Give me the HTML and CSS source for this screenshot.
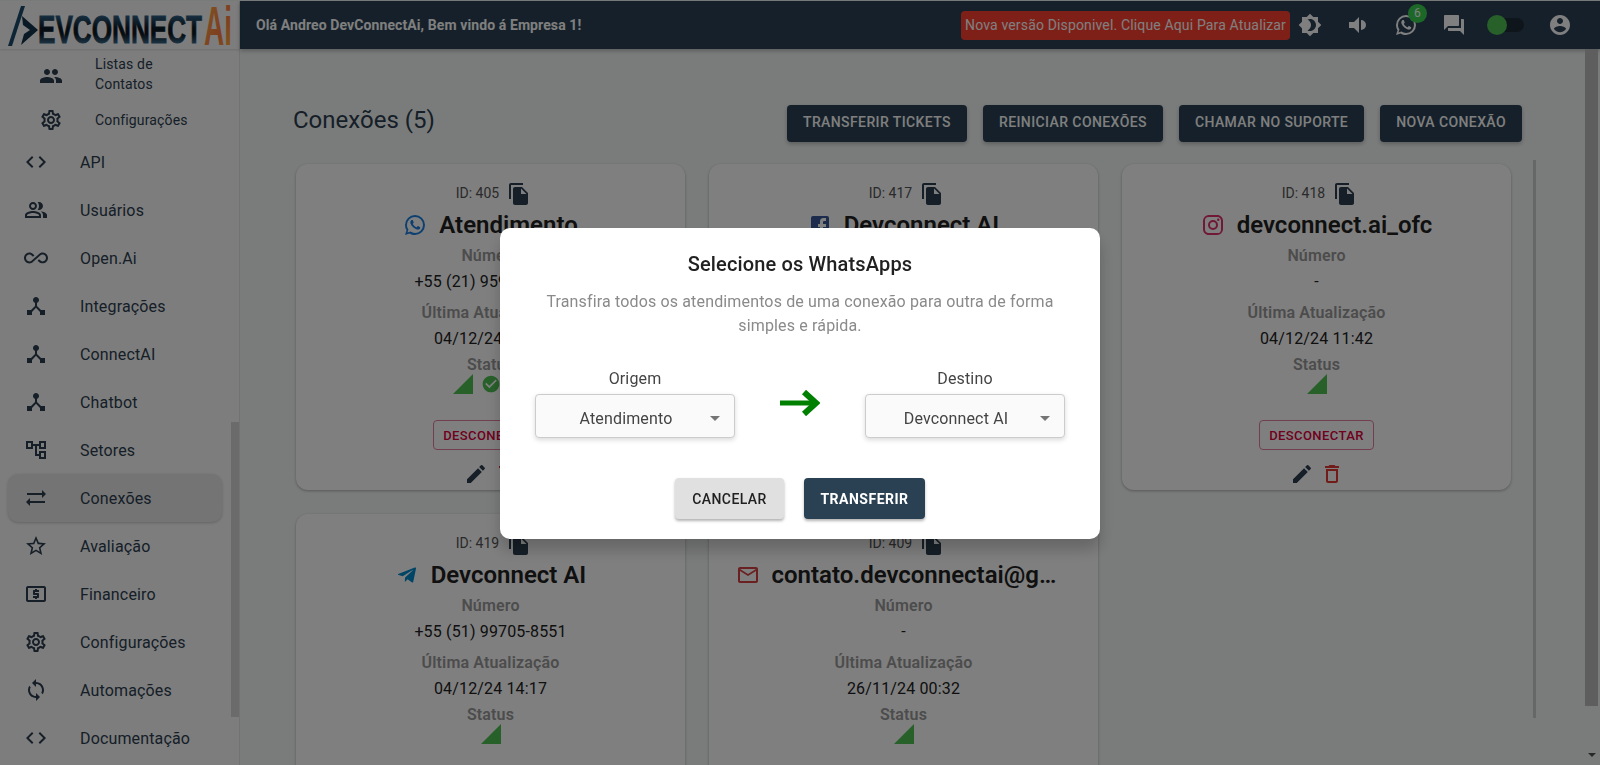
FILE: index.html
```html
<!DOCTYPE html>
<html lang="en">
<head>
  <meta charset="UTF-8" />
  <meta name="viewport" content="width=device-width, initial-scale=1.0"/>
  <title>Conexões</title>
  <link rel="stylesheet" href="styles.css">
</head>
<body>
  <svg class="icon-defs" aria-hidden="true">
    <symbol id="i-people" viewBox="0 0 24 24"><path d="M16 11c1.66 0 2.99-1.34 2.99-3S17.66 5 16 5c-1.66 0-3 1.34-3 3s1.34 3 3 3zm-8 0c1.66 0 2.99-1.34 2.99-3S9.66 5 8 5C6.34 5 5 6.34 5 8s1.34 3 3 3zm0 2c-2.33 0-7 1.17-7 3.5V19h14v-2.5c0-2.33-4.67-3.5-7-3.5zm8 0c-.29 0-.62.02-.97.05 1.16.84 1.97 1.97 1.97 3.45V19h6v-2.5c0-2.33-4.67-3.5-7-3.5z"/></symbol>
    <symbol id="i-gear" viewBox="0 0 24 24"><path d="M19.43 12.98c.04-.32.07-.64.07-.98 0-.34-.03-.66-.07-.98l2.11-1.65c.19-.15.24-.42.12-.64l-2-3.46c-.09-.16-.26-.25-.44-.25-.06 0-.12.01-.17.03l-2.49 1c-.52-.4-1.08-.73-1.69-.98l-.38-2.65C14.46 2.18 14.25 2 14 2h-4c-.25 0-.46.18-.49.42l-.38 2.65c-.61.25-1.17.59-1.69.98l-2.49-1c-.06-.02-.12-.03-.18-.03-.17 0-.34.09-.43.25l-2 3.46c-.13.22-.07.49.12.64l2.11 1.65c-.04.32-.07.65-.07.98 0 .33.03.66.07.98l-2.11 1.65c-.19.15-.24.42-.12.64l2 3.46c.09.16.26.25.44.25.06 0 .12-.01.17-.03l2.49-1c.52.4 1.08.73 1.69.98l.38 2.65c.03.24.24.42.49.42h4c.25 0 .46-.18.49-.42l.38-2.65c.61-.25 1.17-.59 1.69-.98l2.49 1c.06.02.12.03.18.03.17 0 .34-.09.43-.25l2-3.46c.12-.22.07-.49-.12-.64l-2.11-1.65zm-1.98-1.71c.04.31.05.52.05.73 0 .21-.02.43-.05.73l-.14 1.13.89.7 1.08.84-.7 1.21-1.27-.51-1.04-.42-.9.68c-.43.32-.84.56-1.25.73l-1.06.43-.16 1.13-.2 1.35h-1.4l-.19-1.35-.16-1.13-1.06-.43c-.43-.18-.83-.41-1.23-.71l-.91-.7-1.06.43-1.27.51-.7-1.21 1.08-.84.89-.7-.14-1.13c-.03-.31-.05-.54-.05-.74s.02-.43.05-.73l.14-1.13-.89-.7-1.08-.84.7-1.21 1.27.51 1.04.42.9-.68c.43-.32.84-.56 1.25-.73l1.06-.43.16-1.13.2-1.35h1.39l.19 1.35.16 1.13 1.06.43c.43.18.83.41 1.23.71l.91.7 1.06-.43 1.27-.51.7 1.21-1.07.85-.89.7.14 1.13zM12 8c-2.21 0-4 1.79-4 4s1.79 4 4 4 4-1.79 4-4-1.79-4-4-4zm0 6c-1.1 0-2-.9-2-2s.9-2 2-2 2 .9 2 2-.9 2-2 2z"/></symbol>
    <symbol id="i-code" viewBox="0 0 24 24"><path d="M9.4 16.6L4.8 12l4.6-4.6L8 6l-6 6 6 6 1.4-1.4zm5.2 0l4.6-4.6-4.6-4.6L16 6l6 6-6 6-1.4-1.4z"/></symbol>
    <symbol id="i-users" viewBox="0 0 24 24"><path d="M16.67 13.13C18.04 14.06 19 15.32 19 17v3h4v-3c0-2.18-3.57-3.47-6.33-3.87zM15 12c2.21 0 4-1.79 4-4s-1.79-4-4-4c-.47 0-.91.1-1.33.24C14.5 5.27 15 6.58 15 8s-.5 2.73-1.33 3.76c.42.14.86.24 1.33.24zM9 12c2.21 0 4-1.79 4-4s-1.79-4-4-4-4 1.79-4 4 1.79 4 4 4zm0-6c1.1 0 2 .9 2 2s-.9 2-2 2-2-.9-2-2 .9-2 2-2zM9 13c-2.67 0-8 1.34-8 4v3h16v-3c0-2.66-5.33-4-8-4zm6 5H3v-.99C3.2 16.29 6.3 15 9 15s5.8 1.29 6 2z"/></symbol>
    <symbol id="i-infinity" viewBox="0 0 24 24"><path d="M18.6 6.62c-1.44 0-2.8.56-3.77 1.53L12 10.66 10.48 12h.01L7.8 14.39c-.64.64-1.49.99-2.4.99-1.87 0-3.39-1.51-3.39-3.38S3.53 8.62 5.4 8.62c.91 0 1.76.35 2.44 1.03l1.13 1 1.51-1.34L9.22 8.2C8.2 7.18 6.84 6.62 5.4 6.62 2.42 6.62 0 9.04 0 12s2.42 5.38 5.4 5.38c1.44 0 2.8-.56 3.77-1.53l2.83-2.5.01.01L13.52 12h-.01l2.69-2.39c.64-.64 1.49-.99 2.4-.99 1.87 0 3.39 1.51 3.39 3.38s-1.52 3.38-3.39 3.38c-.9 0-1.76-.35-2.44-1.03l-1.14-1.01-1.51 1.34 1.27 1.12c1.02 1.01 2.37 1.57 3.82 1.57 2.98 0 5.4-2.41 5.4-5.38s-2.42-5.37-5.4-5.37z"/></symbol>
    <symbol id="i-hub" viewBox="0 0 24 24"><path d="M17 16l-4-4V8.82C14.16 8.4 15 7.3 15 6c0-1.66-1.34-3-3-3S9 4.34 9 6c0 1.3.84 2.4 2 2.82V12l-4 4H3v5h5v-3.05l4-4.2 4 4.2V21h5v-5h-4z"/></symbol>
    <symbol id="i-tree" viewBox="0 0 24 24"><path d="M22 11V3h-7v3H9V3H2v8h7V8h2v10h4v3h7v-8h-7v3h-2V8h2v3h7zM7 9H4V5h3v4zm10 6h3v4h-3v-4zm0-10h3v4h-3V5z"/></symbol>
    <symbol id="i-sync" viewBox="0 0 24 24"><path d="M22 8l-4-4v3H3v2h15v3l4-4zM2 16l4 4v-3h15v-2H6v-3l-4 4z"/></symbol>
    <symbol id="i-star" viewBox="0 0 24 24"><path d="M22 9.24l-7.19-.62L12 2 9.19 8.63 2 9.24l5.46 4.73L5.82 21 12 17.27 18.18 21l-1.63-7.03L22 9.24zM12 15.4l-3.76 2.27 1-4.28-3.32-2.88 4.38-.38L12 6.1l1.71 4.04 4.38.38-3.32 2.88 1 4.28L12 15.4z"/></symbol>
    <symbol id="i-money" viewBox="0 0 24 24"><path d="M11 17h2v-1h1c.55 0 1-.45 1-1v-3c0-.55-.45-1-1-1h-3v-1h4V8h-2V7h-2v1h-1c-.55 0-1 .45-1 1v3c0 .55.45 1 1 1h3v1H9v2h2v1zm9-13H4c-1.11 0-1.99.89-1.99 2L2 18c0 1.11.89 2 2 2h16c1.11 0 2-.89 2-2V6c0-1.11-.89-2-2-2zm0 14H4V6h16v12z"/></symbol>
    <symbol id="i-loop" viewBox="0 0 24 24"><path d="M12 4V1L8 5l4 4V6c3.31 0 6 2.69 6 6 0 1.01-.25 1.97-.7 2.8l1.46 1.46C19.54 15.03 20 13.57 20 12c0-4.42-3.58-8-8-8zm0 14c-3.31 0-6-2.69-6-6 0-1.01.25-1.97.7-2.8L5.24 7.74C4.46 8.97 4 10.43 4 12c0 4.42 3.58 8 8 8v3l4-4-4-4v3z"/></symbol>
    <symbol id="i-brightness" viewBox="0 0 24 24"><path d="M20 8.69V4h-4.69L12 .69 8.69 4H4v4.69L.69 12 4 15.31V20h4.69L12 23.31 15.31 20H20v-4.69L23.31 12 20 8.69zM12 18c-.89 0-1.74-.2-2.5-.55C11.56 16.5 13 14.42 13 12s-1.44-4.5-3.5-5.45C10.26 6.2 11.11 6 12 6c3.31 0 6 2.69 6 6s-2.69 6-6 6z"/></symbol>
    <symbol id="i-volume" viewBox="0 0 24 24"><path d="M3 9v6h5l5 5V4L8 9H3zM15 7a5 5 0 0 1 0 10z"/></symbol>
    <symbol id="i-whatsapp" viewBox="0 0 24 24"><path d="M16.75 13.96c.25.13.41.2.46.3.06.11.04.61-.21 1.18-.2.56-1.24 1.1-1.7 1.12-.46.02-.47.36-2.96-.73-2.49-1.09-3.99-3.75-4.11-3.92-.12-.17-.96-1.38-.92-2.61.05-1.22.69-1.8.95-2.04.24-.26.51-.29.68-.26h.47c.15 0 .36-.06.55.45l.69 1.87c.06.13.1.28.01.44l-.27.41-.39.42c-.12.12-.26.25-.12.5.12.26.62 1.09 1.32 1.78.91.88 1.71 1.17 1.95 1.3.24.14.39.12.54-.04l.81-.94c.19-.25.35-.19.58-.11l1.67.88M12 2a10 10 0 0 1 10 10 10 10 0 0 1-10 10c-1.97 0-3.8-.57-5.35-1.55L2 22l1.55-4.65A9.969 9.969 0 0 1 2 12 10 10 0 0 1 12 2m0 2a8 8 0 0 0-8 8c0 1.72.54 3.31 1.46 4.61L4.5 19.5l2.89-.96A7.95 7.95 0 0 0 12 20a8 8 0 0 0 8-8 8 8 0 0 0-8-8z"/></symbol>
    <symbol id="i-forum" viewBox="0 0 24 24"><path d="M21 6h-2v9H6v2c0 .55.45 1 1 1h11l4 4V7c0-.55-.45-1-1-1zm-4 6V3c0-.55-.45-1-1-1H3c-.55 0-1 .45-1 1v14l4-4h10c.55 0 1-.45 1-1z"/></symbol>
    <symbol id="i-account" viewBox="0 0 24 24"><path d="M12 2C6.48 2 2 6.48 2 12s4.48 10 10 10 10-4.48 10-10S17.52 2 12 2zm0 3c1.66 0 3 1.34 3 3s-1.34 3-3 3-3-1.34-3-3 1.34-3 3-3zm0 14.2c-2.5 0-4.71-1.28-6-3.22.03-1.99 4-3.08 6-3.08 1.99 0 5.97 1.09 6 3.08-1.29 1.94-3.5 3.22-6 3.22z"/></symbol>
    <symbol id="i-copy" viewBox="0 0 24 24"><path d="M16 1H4c-1.1 0-2 .9-2 2v14h2V3h12V1zm-1 4l6 6v10c0 1.1-.9 2-2 2H7.99C6.89 23 6 22.1 6 21l.01-14c0-1.1.89-2 1.99-2h7zm-1 7h5.5L14 6.5V12z"/></symbol>
    <symbol id="i-signal" viewBox="0 0 24 24"><path d="M2 22h20V2z"/></symbol>
    <symbol id="i-check" viewBox="0 0 24 24"><path d="M12 2C6.48 2 2 6.48 2 12s4.48 10 10 10 10-4.48 10-10S17.52 2 12 2zm-2 15l-5-5 1.41-1.41L10 14.17l7.59-7.59L19 8l-9 9z"/></symbol>
    <symbol id="i-edit" viewBox="0 0 24 24"><path d="M3 17.25V21h3.75L17.81 9.94l-3.75-3.75L3 17.25zM20.71 7.04c.39-.39.39-1.02 0-1.41l-2.34-2.34a.9959.9959 0 0 0-1.41 0l-1.83 1.83 3.75 3.75 1.83-1.83z"/></symbol>
    <symbol id="i-delete" viewBox="0 0 24 24"><path d="M6 19c0 1.1.9 2 2 2h8c1.1 0 2-.9 2-2V7H6v12zM8 9h8v10H8V9zm7.5-5l-1-1h-5l-1 1H5v2h14V4z"/></symbol>
    <symbol id="i-facebook" viewBox="0 0 24 24"><path d="M5 3h14a2 2 0 0 1 2 2v14a2 2 0 0 1-2 2h-4v-7h3v-3h-3V9a1 1 0 0 1 1-1h2V5h-2.5A3.5 3.5 0 0 0 12 8.5V11h-2v3h2v7H5a2 2 0 0 1-2-2V5a2 2 0 0 1 2-2z"/></symbol>
    <symbol id="i-instagram" viewBox="0 0 24 24"><path d="M7.8 2h8.4C19.4 2 22 4.6 22 7.8v8.4a5.8 5.8 0 0 1-5.8 5.8H7.8C4.6 22 2 19.4 2 16.2V7.8A5.8 5.8 0 0 1 7.8 2m-.2 2A3.6 3.6 0 0 0 4 7.6v8.8C4 18.39 5.61 20 7.6 20h8.8a3.6 3.6 0 0 0 3.6-3.6V7.6C20 5.61 18.39 4 16.4 4H7.6m9.65 1.5a1.25 1.25 0 0 1 1.25 1.25A1.25 1.25 0 0 1 17.25 8 1.25 1.25 0 0 1 16 6.75a1.25 1.25 0 0 1 1.25-1.25M12 7a5 5 0 0 1 5 5 5 5 0 0 1-5 5 5 5 0 0 1-5-5 5 5 0 0 1 5-5m0 2a3 3 0 0 0-3 3 3 3 0 0 0 3 3 3 3 0 0 0 3-3 3 3 0 0 0-3-3z"/></symbol>
    <symbol id="i-telegram" viewBox="0 0 24 24"><path d="M9.78 18.65l.28-4.23 7.68-6.92c.34-.31-.07-.46-.52-.19L7.74 13.3 3.64 12c-.88-.25-.89-.86.2-1.3l15.97-6.16c.73-.33 1.43.18 1.15 1.3l-2.72 12.81c-.19.91-.74 1.13-1.5.71L12.6 16.3l-1.99 1.93c-.23.23-.42.42-.83.42z"/></symbol>
    <symbol id="i-mail" viewBox="0 0 24 24"><path d="M20 4H4c-1.1 0-2 .9-2 2v12c0 1.1.9 2 2 2h16c1.1 0 2-.9 2-2V6c0-1.1-.9-2-2-2zm0 14H4V8l8 5 8-5v10zm-8-7L4 6h16l-8 5z"/></symbol>
  </svg>

  <div class="app">
    <aside class="sidebar">
      <div class="logo">
        <svg class="logo-img" width="232" height="49" viewBox="0 0 232 49">
          <defs>
            <linearGradient id="logo-steel" x1="0" y1="0" x2="0" y2="1">
              <stop offset="0" stop-color="#3f86b8"/>
              <stop offset="0.45" stop-color="#0c1a24"/>
              <stop offset="0.6" stop-color="#0c1a24"/>
              <stop offset="1" stop-color="#5aa6d8"/>
            </linearGradient>
            <linearGradient id="logo-orange" x1="0" y1="0" x2="1" y2="1">
              <stop offset="0" stop-color="#ffb040"/>
              <stop offset="0.6" stop-color="#ff7c40"/>
              <stop offset="1" stop-color="#ffc030"/>
            </linearGradient>
          </defs>
          <path class="logo-slash" d="M21 6h4L12 46H8z"/>
          <path class="logo-arrow" d="M22 16l16 14-17 15 3-11 6-4-7-5z"/>
          <text class="logo-word" x="38" y="43" textLength="164" lengthAdjust="spacingAndGlyphs">EVCONNECT</text>
          <text class="logo-ai" x="204" y="45" textLength="28" lengthAdjust="spacingAndGlyphs">Ai</text>
        </svg>
      </div>
      <div class="sidebar-body">
        <nav class="nav">
          <div class="sub-item sub-first">
            <svg class="icon sub-icon"><use href="#i-people"/></svg>
            <span class="sub-label">Listas de Contatos</span>
          </div>
          <div class="sub-item sub-second">
            <svg class="icon"><use href="#i-gear"/></svg>
            <span class="sub-label">Configurações</span>
          </div>
          <div class="nav-item"><svg class="icon"><use href="#i-code"/></svg><span>API</span></div>
          <div class="nav-item"><svg class="icon"><use href="#i-users"/></svg><span>Usuários</span></div>
          <div class="nav-item"><svg class="icon"><use href="#i-infinity"/></svg><span>Open.Ai</span></div>
          <div class="nav-item"><svg class="icon"><use href="#i-hub"/></svg><span>Integrações</span></div>
          <div class="nav-item"><svg class="icon"><use href="#i-hub"/></svg><span>ConnectAI</span></div>
          <div class="nav-item"><svg class="icon"><use href="#i-hub"/></svg><span>Chatbot</span></div>
          <div class="nav-item"><svg class="icon"><use href="#i-tree"/></svg><span>Setores</span></div>
          <div class="nav-item active"><svg class="icon"><use href="#i-sync"/></svg><span>Conexões</span></div>
          <div class="nav-item"><svg class="icon"><use href="#i-star"/></svg><span>Avaliação</span></div>
          <div class="nav-item"><svg class="icon"><use href="#i-money"/></svg><span>Financeiro</span></div>
          <div class="nav-item"><svg class="icon"><use href="#i-gear"/></svg><span>Configurações</span></div>
          <div class="nav-item"><svg class="icon"><use href="#i-loop"/></svg><span>Automações</span></div>
          <div class="nav-item"><svg class="icon"><use href="#i-code"/></svg><span>Documentação</span></div>
        </nav>
        <div class="nav-scroll"></div>
      </div>
    </aside>

    <div class="content">
      <header class="topbar">
        <div class="greeting">Olá Andreo DevConnectAi, Bem vindo á Empresa 1!</div>
        <div class="update-chip">Nova versão Disponivel. Clique Aqui Para Atualizar</div>
        <div class="top-icon"><svg class="icon"><use href="#i-brightness"/></svg></div>
        <div class="top-icon"><svg class="icon"><use href="#i-volume"/></svg></div>
        <div class="top-icon">
          <svg class="icon"><use href="#i-whatsapp"/></svg>
          <span class="count-badge">6</span>
        </div>
        <div class="top-icon"><svg class="icon"><use href="#i-forum"/></svg></div>
        <div class="switch"><span class="switch-track"><span class="switch-knob"></span></span></div>
        <div class="top-icon"><svg class="icon"><use href="#i-account"/></svg></div>
      </header>

      <div class="page">
        <main class="main">
          <div class="page-head">
            <h1>Conexões (5)</h1>
            <div class="head-actions">
              <button class="btn-dark">Transferir Tickets</button>
              <button class="btn-dark">Reiniciar Conexões</button>
              <button class="btn-dark">Chamar no Suporte</button>
              <button class="btn-dark">Nova Conexão</button>
            </div>
          </div>

          <div class="cards-wrap">
            <div class="cards">
              <section class="card">
                <div class="card-id">ID: 405 <svg class="icon"><use href="#i-copy"/></svg></div>
                <div class="card-title"><svg class="icon c-whatsapp"><use href="#i-whatsapp"/></svg><span>Atendimento</span></div>
                <div class="field-label">Número</div>
                <div class="field-value">+55 (21) 95900-1020</div>
                <div class="field-label label-gap">Última Atualização</div>
                <div class="field-value">04/12/24 14:19</div>
                <div class="field-label">Status</div>
                <div class="status">
                  <svg class="icon c-ok"><use href="#i-signal"/></svg>
                  <svg class="icon icon-small c-ok"><use href="#i-check"/></svg>
                  <svg class="icon c-ok"><use href="#i-check"/></svg>
                </div>
                <button class="btn-outline">Desconectar</button>
                <div class="card-actions"><svg class="icon"><use href="#i-edit"/></svg><svg class="icon c-delete"><use href="#i-delete"/></svg></div>
              </section>

              <section class="card">
                <div class="card-id">ID: 417 <svg class="icon"><use href="#i-copy"/></svg></div>
                <div class="card-title"><svg class="icon c-facebook"><use href="#i-facebook"/></svg><span>Devconnect AI</span></div>
                <div class="field-label">Número</div>
                <div class="field-value">-</div>
                <div class="field-label label-gap">Última Atualização</div>
                <div class="field-value">04/12/24 11:40</div>
                <div class="field-label">Status</div>
                <div class="status"><svg class="icon c-ok"><use href="#i-signal"/></svg></div>
                <button class="btn-outline">Desconectar</button>
                <div class="card-actions"><svg class="icon"><use href="#i-edit"/></svg><svg class="icon c-delete"><use href="#i-delete"/></svg></div>
              </section>

              <section class="card">
                <div class="card-id">ID: 418 <svg class="icon"><use href="#i-copy"/></svg></div>
                <div class="card-title"><svg class="icon c-instagram"><use href="#i-instagram"/></svg><span>devconnect.ai_ofc</span></div>
                <div class="field-label">Número</div>
                <div class="field-value">-</div>
                <div class="field-label label-gap">Última Atualização</div>
                <div class="field-value">04/12/24 11:42</div>
                <div class="field-label">Status</div>
                <div class="status"><svg class="icon c-ok"><use href="#i-signal"/></svg></div>
                <button class="btn-outline">Desconectar</button>
                <div class="card-actions"><svg class="icon"><use href="#i-edit"/></svg><svg class="icon c-delete"><use href="#i-delete"/></svg></div>
              </section>

              <section class="card">
                <div class="card-id">ID: 419 <svg class="icon"><use href="#i-copy"/></svg></div>
                <div class="card-title"><svg class="icon c-telegram"><use href="#i-telegram"/></svg><span>Devconnect AI</span></div>
                <div class="field-label">Número</div>
                <div class="field-value">+55 (51) 99705-8551</div>
                <div class="field-label label-gap">Última Atualização</div>
                <div class="field-value">04/12/24 14:17</div>
                <div class="field-label">Status</div>
                <div class="status"><svg class="icon c-ok"><use href="#i-signal"/></svg></div>
              </section>

              <section class="card">
                <div class="card-id">ID: 409 <svg class="icon"><use href="#i-copy"/></svg></div>
                <div class="card-title"><svg class="icon c-mail"><use href="#i-mail"/></svg><span>contato.devconnectai@gmail.com</span></div>
                <div class="field-label">Número</div>
                <div class="field-value">-</div>
                <div class="field-label label-gap">Última Atualização</div>
                <div class="field-value">26/11/24 00:32</div>
                <div class="field-label">Status</div>
                <div class="status"><svg class="icon c-ok"><use href="#i-signal"/></svg></div>
              </section>
            </div>
            <div class="cards-scroll"></div>
          </div>
        </main>
        <div class="page-scroll">
          <div class="page-thumb"></div>
          <div class="scroll-arrow"></div>
        </div>
      </div>
    </div>
  </div>

  <div class="backdrop">
    <div class="dialog">
      <h2>Selecione os WhatsApps</h2>
      <p>Transfira todos os atendimentos de uma conexão para outra de forma simples e rápida.</p>
      <div class="transfer-row">
        <div class="transfer-col">
          <div class="transfer-label">Origem</div>
          <div class="fake-select"><span>Atendimento</span><i class="caret"></i></div>
        </div>
        <svg class="transfer-arrow" width="40" height="26" viewBox="0 0 40 26">
          <path d="M0 13h35" fill="none" stroke="#008000" stroke-width="5"/>
          <path d="M24 2l12 11-12 11" fill="none" stroke="#008000" stroke-width="6"/>
        </svg>
        <div class="transfer-col">
          <div class="transfer-label">Destino</div>
          <div class="fake-select"><span>Devconnect AI</span><i class="caret"></i></div>
        </div>
      </div>
      <div class="dialog-actions">
        <button class="btn-cancel">Cancelar</button>
        <button class="btn-confirm">Transferir</button>
      </div>
    </div>
  </div>
</body>
</html>
```

FILE: styles.css
```css
* {
  box-sizing: border-box;
}

html, body {
  height: 100%;
}

body {
  margin: 0;
  overflow: hidden;
  font-family: Roboto, "Liberation Sans", sans-serif;
  font-size: 16px;
  letter-spacing: 0.15px;
  color: #212121;
  background: #f5f8f7;
}

.icon-defs {
  display: none;
}

.icon {
  width: 24px;
  height: 24px;
  flex: none;
  fill: currentColor;
}

.icon-small {
  width: 20px;
  height: 20px;
  margin-top: 2px;
}

button {
  font-family: inherit;
  cursor: pointer;
}

.app {
  display: flex;
  height: 765px;
  padding-top: 1px;
}

/* sidebar */
.sidebar {
  width: 240px;
  flex: none;
  display: flex;
  flex-direction: column;
  background: #fafafa;
  border-right: 1px solid #e4e4e4;
}

.logo {
  height: 48px;
  flex: none;
  overflow: hidden;
  box-shadow: 0 1px 2px rgba(0,0,0,0.12);
  position: relative;
}

.logo-img {
  display: block;
  margin-top: -1px;
}

.logo-slash {
  fill: #1c4a6c;
}

.logo-arrow {
  fill: #12324a;
}

.logo-word {
  font-family: "Liberation Sans", sans-serif;
  font-weight: bold;
  font-size: 38px;
  letter-spacing: 0;
  fill: url(#logo-steel);
  stroke: url(#logo-steel);
  stroke-width: 0.8px;
}

.logo-ai {
  font-family: "Liberation Sans", sans-serif;
  font-weight: bold;
  font-size: 56px;
  letter-spacing: 0;
  fill: url(#logo-orange);
}

.sidebar-body {
  flex: 1;
  display: flex;
  min-height: 0;
}

.nav {
  width: 231px;
  flex: none;
  padding-top: 1px;
  color: #2c3e50;
}

.sub-item {
  display: flex;
  align-items: center;
  padding-left: 39px;
  font-size: 14px;
  line-height: 20px;
}

.sub-first {
  height: 48px;
}

.sub-second {
  height: 40px;
  padding-top: 3px;
}

.sub-icon {
  margin-top: 4px;
}

.sub-label {
  width: 110px;
  margin-left: 32px;
  padding-right: 20px;
}

.sub-second .sub-label {
  padding-right: 0;
}

.nav-item {
  display: flex;
  align-items: center;
  gap: 32px;
  height: 48px;
  padding-left: 24px;
}

.nav-item.active {
  margin: 0 9px 0 8px;
  padding-left: 16px;
  background: #e8e8e8;
  border-radius: 10px;
  box-shadow: 0 1px 3px rgba(0,0,0,0.2);
}

.nav-scroll {
  width: 8px;
  height: 295px;
  margin-top: 373px;
  background: #d6d6d6;
}

/* top bar */
.content {
  flex: 1;
  min-width: 0;
  display: flex;
  flex-direction: column;
}

.topbar {
  height: 48px;
  flex: none;
  display: flex;
  align-items: center;
  padding: 0 16px;
  background: #2a4154;
  color: #fff;
  box-shadow: 0 2px 4px rgba(0,0,0,0.25);
}

.greeting {
  flex: 1;
  font-size: 14px;
  font-weight: 700;
  letter-spacing: 0.1px;
}

.update-chip {
  height: 29px;
  margin-right: -4px;
  padding: 0 4px;
  display: flex;
  align-items: center;
  background: #fe4030;
  border-radius: 4px;
  font-size: 14px;
  white-space: nowrap;
}

.top-icon {
  width: 48px;
  height: 48px;
  flex: none;
  display: flex;
  align-items: center;
  justify-content: center;
  position: relative;
}

.count-badge {
  position: absolute;
  top: 3px;
  left: 26px;
  width: 19px;
  height: 19px;
  border-radius: 50%;
  background: #3ad050;
  font-size: 12px;
  line-height: 19px;
  text-align: center;
}

.switch {
  width: 58px;
  flex: none;
  display: flex;
  align-items: center;
  padding-left: 9px;
}

.switch-track {
  display: flex;
  align-items: center;
  width: 37px;
  height: 14px;
  border-radius: 7px;
  background: #1c2c38;
}

.switch-knob {
  width: 20px;
  height: 20px;
  border-radius: 50%;
  background: #50c054;
}

/* page */
.page {
  flex: 1;
  min-height: 0;
  display: flex;
}

.main {
  flex: 1;
  min-width: 0;
  overflow: hidden;
  padding-top: 56px;
}

.page-head {
  display: flex;
  align-items: center;
  justify-content: space-between;
  width: 1229px;
  margin-left: 53px;
}

.page-head h1 {
  margin: -8px 0 0;
  font-size: 24px;
  font-weight: 400;
  line-height: 32px;
  letter-spacing: 0;
  color: #2c3e50;
}

.head-actions {
  display: flex;
  gap: 16px;
}

.btn-dark {
  height: 37px;
  padding: 0 16px 3px;
  border: 0;
  border-radius: 4px;
  background: #2a4154;
  color: #fff;
  font-size: 14px;
  font-weight: 500;
  letter-spacing: 0.4px;
  text-transform: uppercase;
  box-shadow: 0 2px 4px rgba(0,0,0,0.25);
}

.cards-wrap {
  display: flex;
  margin-top: 18px;
  margin-left: 56px;
}

.cards {
  display: grid;
  grid-template-columns: repeat(3, 389px);
  grid-auto-rows: 326px;
  gap: 24px;
  padding-top: 4px;
}

.cards-scroll {
  width: 3px;
  height: 558px;
  margin-left: 22px;
  background: #cfcfcf;
}

.page-scroll {
  width: 15px;
  flex: none;
  display: flex;
  flex-direction: column;
  align-items: flex-start;
}

.page-thumb {
  width: 13px;
  height: 657px;
  background: #bdbdbd;
}

.scroll-arrow {
  margin: 47px 0 0 3px;
  border-left: 4px solid transparent;
  border-right: 4px solid transparent;
  border-top: 4px solid #505050;
}

/* connection card */
.card {
  display: flex;
  flex-direction: column;
  align-items: center;
  padding-top: 17px;
  background: #fff;
  border-radius: 12px;
  box-shadow: 0 1px 3px rgba(0,0,0,0.3);
  text-align: center;
}

.card-id {
  display: flex;
  align-items: center;
  gap: 8px;
  height: 24px;
  margin-left: 6px;
  font-size: 14px;
  letter-spacing: 0;
  color: #555;
}

.card-id .icon {
  color: #2c3e50;
  margin-top: 2px;
}

.card-title {
  display: flex;
  align-items: center;
  gap: 12px;
  height: 32px;
  margin: 4px 0 3px;
  font-size: 24px;
  font-weight: 600;
  letter-spacing: 0;
  color: #212121;
}

.card-title span {
  max-width: 300px;
  overflow: hidden;
  text-overflow: ellipsis;
  white-space: nowrap;
}

.field-label {
  height: 24px;
  font-weight: 600;
  line-height: 24px;
  color: #999;
}

.label-gap {
  margin-top: 7px;
}

.field-value {
  height: 24px;
  margin-top: 2px;
  line-height: 24px;
  color: #212121;
}

.field-value + .field-label:not(.label-gap) {
  margin-top: 2px;
}

.status {
  display: flex;
  gap: 6px;
  height: 24px;
  margin-top: -5px;
}

.c-ok { color: #50c054; }
.c-whatsapp { color: #1a7fe0; }
.c-facebook { color: #3b5998; }
.c-instagram { color: #e1306c; }
.c-telegram { color: #0088cc; }
.c-mail { color: #d44040; }
.c-delete { color: #e53935; }

.btn-outline {
  height: 30px;
  margin-top: 24px;
  padding: 0 9px;
  background: transparent;
  border: 1px solid #e57ea0;
  border-radius: 4px;
  color: #e0003c;
  font-size: 13px;
  font-weight: 500;
  letter-spacing: 0.4px;
  text-transform: uppercase;
}

.card-actions {
  display: flex;
  gap: 6px;
  margin-top: 12px;
  color: #2c3e50;
}

/* dialog */
.backdrop {
  position: fixed;
  inset: 0;
  display: flex;
  align-items: center;
  justify-content: center;
  padding-top: 2px;
  background: rgba(0,0,0,0.5);
}

.dialog {
  width: 600px;
  height: 311px;
  padding: 20px 35px 0;
  background: #fff;
  border-radius: 10px;
  box-shadow: 0 11px 15px rgba(0,0,0,0.2);
  text-align: center;
}

.dialog h2 {
  margin: 0;
  font-size: 20px;
  font-weight: 500;
  line-height: 32px;
  letter-spacing: 0.15px;
  color: #212121;
}

.dialog p {
  margin: 10px 0 0;
  line-height: 24px;
  color: #8a8a8a;
  padding: 0 8px;
}

.transfer-row {
  display: flex;
  align-items: flex-start;
  justify-content: space-between;
  margin-top: 29px;
}

.transfer-col {
  width: 200px;
}

.transfer-label {
  height: 24px;
  line-height: 24px;
  color: #444;
}

.fake-select {
  display: flex;
  align-items: center;
  justify-content: center;
  gap: 8px;
  height: 44px;
  margin-top: 3px;
  padding-left: 14px;
  padding-top: 4px;
  background: #fafafa;
  border: 1px solid #ccc;
  border-radius: 4px;
  box-shadow: 0 2px 5px rgba(0,0,0,0.15);
  color: #444;
}

.fake-select span {
  flex: 1;
}

.caret {
  margin-right: 14px;
  border-left: 5px solid transparent;
  border-right: 5px solid transparent;
  border-top: 5px solid #757575;
}

.transfer-arrow {
  margin-top: 23px;
}

.dialog-actions {
  display: flex;
  justify-content: center;
  gap: 20px;
  margin-top: 40px;
}

.dialog-actions button {
  height: 41px;
  border: 0;
  border-radius: 4px;
  font-size: 14px;
  font-weight: 500;
  letter-spacing: 0.4px;
  text-transform: uppercase;
  box-shadow: 0 2px 3px rgba(0,0,0,0.3);
}

.btn-cancel {
  width: 109px;
  background: #e0e0e0;
  color: #212121;
}

.dialog-actions .btn-confirm {
  width: 121px;
  background: #2a4154;
  color: #fff;
  font-weight: 700;
  letter-spacing: 0.5px;
}
```
